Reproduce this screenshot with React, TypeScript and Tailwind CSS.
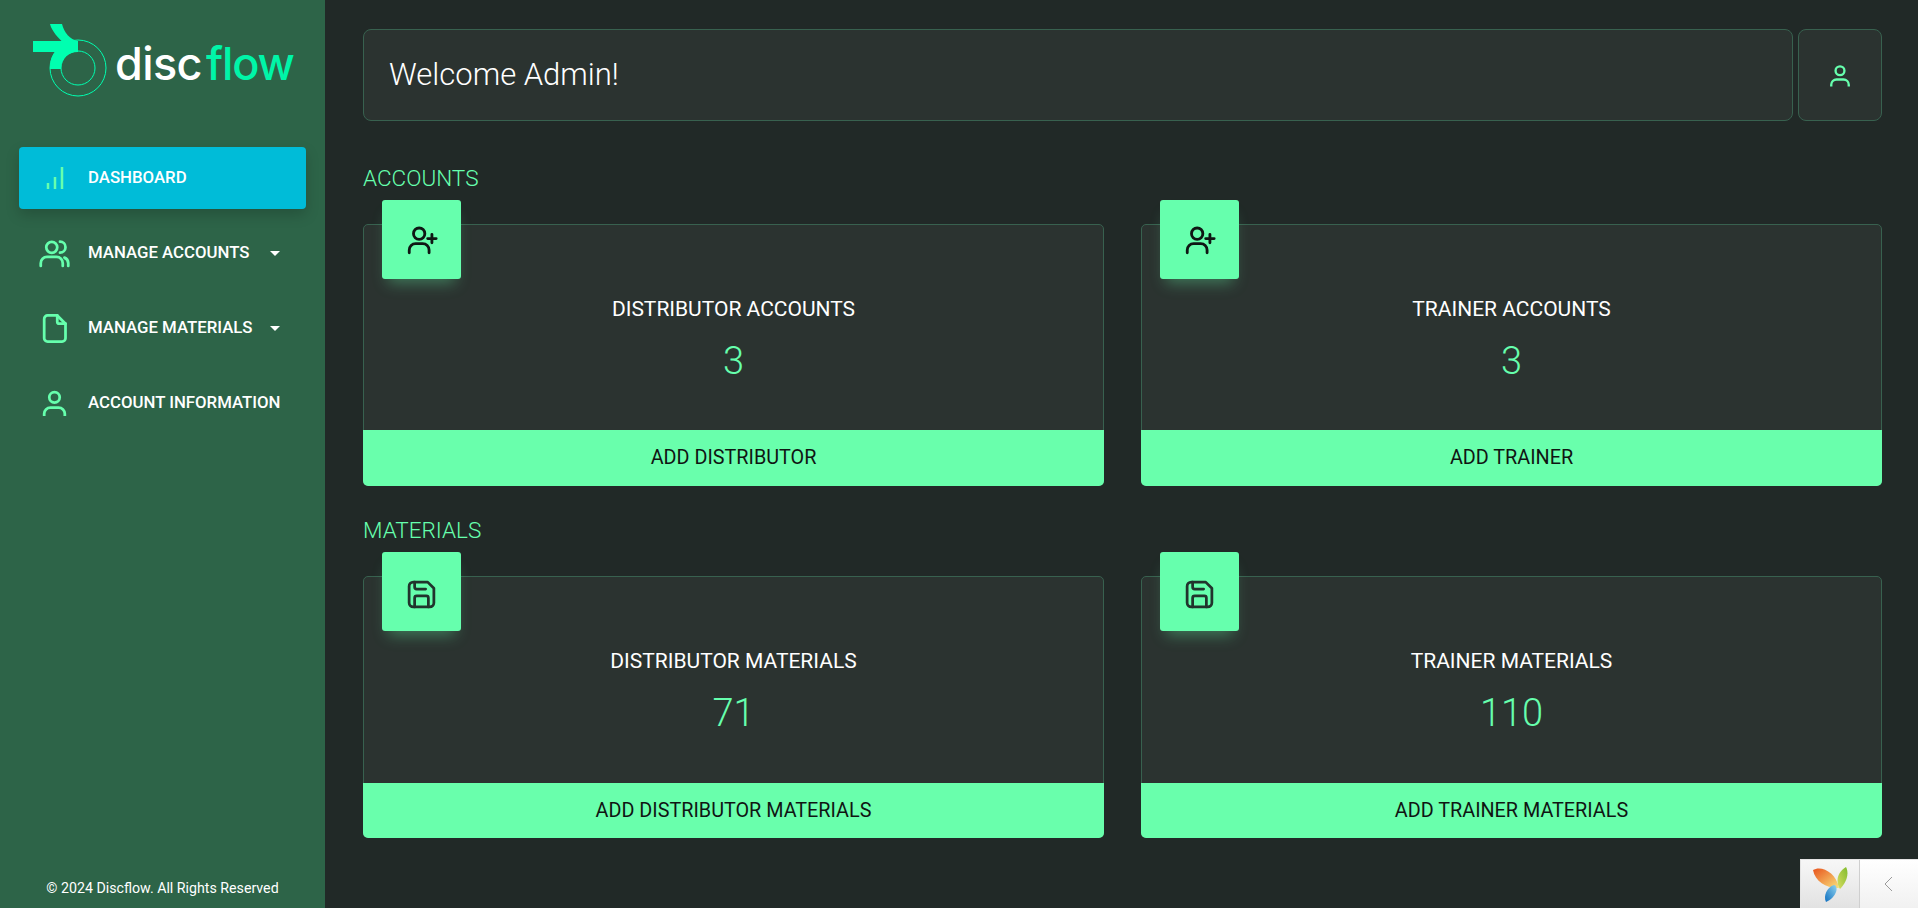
import React from "react";

const Icon = ({ size, className, children }: { size: number; className?: string; children: React.ReactNode }) => (
  <svg width={size} height={size} viewBox="0 0 24 24" fill="none" stroke="currentColor" strokeWidth={2} strokeLinecap="round" strokeLinejoin="round" className={className}>
    {children}
  </svg>
);

const UserIcon = ({ size, className }: { size: number; className?: string }) => (
  <Icon size={size} className={className}>
    <circle cx="12" cy="7.5" r="3.800" />
    <path d="M4.500 21v-1.500a4.500 4.500 0 0 1 4.500-4.500h6a4.500 4.500 0 0 1 4.500 4.500V21" strokeLinecap="butt" />
  </Icon>
);
const UsersIcon = ({ size }: { size: number }) => (
  <Icon size={size}>
    <circle cx="10" cy="7.5" r="4" />
    <path d="M2 21v-2a4.500 4.500 0 0 1 4.500-4.500h7a4.500 4.500 0 0 1 4.500 4.500v2" />
    <path d="M16 3.400a4 4 0 0 1 0 8" />
    <path d="M22 21v-2a4.500 4.500 0 0 0-2.800-4" />
  </Icon>
);
const UserPlusIcon = ({ size }: { size: number }) => (
  <Icon size={size}>
    <circle cx="10" cy="7.5" r="4" />
    <path d="M3 21v-2a4.500 4.500 0 0 1 4.500-4.500h5a4.500 4.500 0 0 1 4.500 4.500v2" />
    <path d="M19 8v6M16 11h6" />
  </Icon>
);
const FileIcon = ({ size }: { size: number }) => (
  <Icon size={size}>
    <path d="M7 2.500h7l6 6V19a2.500 2.500 0 0 1-2.500 2.500h-10.500A2.500 2.500 0 0 1 4.500 19V5A2.500 2.500 0 0 1 7 2.500z" />
    <path d="M14 2.500V7a1.500 1.500 0 0 0 1.500 1.500H20" />
  </Icon>
);
const SaveIcon = ({ size }: { size: number }) => (
  <Icon size={size}>
    <path d="M6 3h10.500L21 7.500V18a3 3 0 0 1-3 3H6a3 3 0 0 1-3-3V6a3 3 0 0 1 3-3z" />
    <path d="M7 21v-6.500a1.500 1.500 0 0 1 1.500-1.500h7a1.500 1.500 0 0 1 1.500 1.500V21" />
    <path d="M7 3v3.500A1.500 1.500 0 0 0 8.500 8H15" />
  </Icon>
);

const Logo = () => (
  <div className="flex items-center h-[120px] pl-[33px]">
    <svg width="84" height="80" viewBox="33 21 84 80" className="shrink-0 mt-[1px]" fill="none">
      <circle cx="78" cy="68" r="28" stroke="#00ffb0" strokeWidth="1" />
      <circle cx="78" cy="68" r="17" stroke="#00ffb0" strokeWidth="1" />
      <path d="M33 41h28.500C59 38 52 32 50 24h12c2 8 8 16 16 17v11c-10 0-17 7-17 17H50c0-6 1-12 5-17H33z" fill="#00ffb0" />
    </svg>
    <div className="ml-[-2px] mt-[6px] text-[45px] leading-none font-medium font-[Inter,sans-serif] tracking-[-0.6px] flex">
      <span className="text-white">disc</span>
      <span className="text-[#00f5a8] ml-[4px] tracking-[-1.100px]">flow</span>
    </div>
  </div>
);

const navItems: { label: string; icon: React.ReactNode; caret?: boolean; active?: boolean }[] = [
  { label: "DASHBOARD", active: true, icon: (
    <svg width="22" height="24" viewBox="0 0 22 24" fill="none" stroke="#66ffad" strokeWidth="2.500" className="ml-[2px]"><path d="M3 23v-6M10 23V11M17 23V1" /></svg>
  ) },
  { label: "MANAGE ACCOUNTS", caret: true, icon: <UsersIcon size={33} /> },
  { label: "MANAGE MATERIALS", caret: true, icon: <FileIcon size={33} /> },
  { label: "ACCOUNT INFORMATION", icon: <UserIcon size={33} /> },
];

const Card = ({ title, value, action, icon, iconClass, footerClass }: { title: string; value: string; action: string; icon: React.ReactNode; iconClass: string; footerClass: string }) => (
  <div className="relative h-[262px] rounded-[5px] border border-[#38614f] bg-[#2b3330] flex flex-col">
    <div className={`absolute left-[18px] top-[-25px] w-[79px] h-[79px] rounded-[3px] bg-[#66ffad] flex items-center justify-center ${iconClass} shadow-[0_10px_14px_-6px_rgba(102,255,173,0.35)]`}>
      {icon}
    </div>
    <div className="flex-1 flex flex-col items-center pt-[72px]">
      <div className="text-white text-[21px] leading-[24px] font-[Roboto,sans-serif]">{title}</div>
      <div className="mt-[17px] text-[#66ffad] text-[38px] leading-[46px] font-light font-[Roboto,sans-serif]">{value}</div>
    </div>
    <div className={`-mx-px -mb-px rounded-b-[5px] bg-[#69ffac] flex items-center justify-center text-[#101513] text-[19.800px] font-[Roboto,sans-serif] ${footerClass}`}>
      {action}
    </div>
  </div>
);

const Heading = ({ children, top }: { children: React.ReactNode; top: string }) => (
  <h3 className={`${top} mb-[32px] h-[28px] leading-[28px] text-[22.500px] font-light text-[#66ffad] font-[Roboto,sans-serif]`}>{children}</h3>
);

export default function App() {
  return (
    <div className="relative flex h-[908px] w-full overflow-hidden bg-[#212927] font-[Roboto,sans-serif]">
      <aside className="w-[325px] shrink-0 bg-[#2d6448] flex flex-col">
        <Logo />
        <nav className="mt-[27px] px-[19px] flex flex-col gap-[13px]">
          {navItems.map((n) => (
            <div key={n.label} className={`h-[62px] flex items-center rounded-[4px] ${n.active ? "bg-[#00bcd8] shadow-[0_6px_14px_rgba(0,0,0,0.18)]" : ""}`}>
              <div className="w-[69px] shrink-0 flex justify-center pl-[2px] text-[#66ffad]">{n.icon}</div>
              <span className="text-white text-[16.800px] font-medium whitespace-nowrap">{n.label}</span>
              {n.caret && <span className="ml-auto mr-[26px] w-0 h-0 border-x-[5.500px] border-x-transparent border-t-[5px] border-t-white" />}
            </div>
          ))}
        </nav>
        <div className="mt-auto pb-[9px] text-center text-white text-[14.200px]">© 2024 Discflow. All Rights Reserved</div>
      </aside>

      <main className="flex-1 pl-[38px] pr-[36px] pt-[29px]">
        <div className="flex gap-[5px] h-[92px]">
          <div className="flex-1 rounded-[8px] border border-[#38614f] bg-[#2b3330] flex items-center pl-[25px] text-white text-[31px] font-light">Welcome Admin!</div>
          <div className="w-[84px] rounded-[8px] border border-[#38614f] bg-[#2b3330] flex items-center justify-center text-[#66ffad]"><UserIcon size={28} className="mt-[2px]" /></div>
        </div>
        <Heading top="mt-[43px]">ACCOUNTS</Heading>
        <div className="grid grid-cols-2 gap-[37px]">
          <Card title="DISTRIBUTOR ACCOUNTS" value="3" action="ADD DISTRIBUTOR" footerClass="h-[56px]" iconClass="text-[#0f1714]" icon={<UserPlusIcon size={34} />} />
          <Card title="TRAINER ACCOUNTS" value="3" action="ADD TRAINER" footerClass="h-[56px]" iconClass="text-[#0f1714]" icon={<UserPlusIcon size={34} />} />
        </div>
        <Heading top="mt-[30px]">MATERIALS</Heading>
        <div className="grid grid-cols-2 gap-[37px]">
          <Card title="DISTRIBUTOR MATERIALS" value="71" action="ADD DISTRIBUTOR MATERIALS" footerClass="h-[55px]" iconClass="text-[#21342d] pt-[6px]" icon={<SaveIcon size={33} />} />
          <Card title="TRAINER MATERIALS" value="110" action="ADD TRAINER MATERIALS" footerClass="h-[55px]" iconClass="text-[#21342d] pt-[6px]" icon={<SaveIcon size={33} />} />
        </div>
      </main>

      <div className="absolute right-0 bottom-0 w-[118px] h-[49px] flex border-t border-l border-[#e4e4e4] bg-white">
        <div className="w-[59px] border-r border-[#cfcfcf] bg-gradient-to-b from-[#f7f7f7] to-[#e2e2e2] flex items-center justify-center">
          <svg width="37" height="36" viewBox="0 0 37 36">
            <defs>
              <linearGradient id="yo" x1="0" y1="0" x2="1" y2="1"><stop offset="0" stopColor="#e8531c" /><stop offset="1" stopColor="#f9e27d" /></linearGradient>
              <linearGradient id="yg" x1="1" y1="0" x2="0" y2="1"><stop offset="0" stopColor="#7fbb2c" /><stop offset="1" stopColor="#d9dd62" /></linearGradient>
              <linearGradient id="yb" x1="0" y1="1" x2="1" y2="0"><stop offset="0" stopColor="#0f6fc0" /><stop offset="1" stopColor="#8fd2ee" /></linearGradient>
            </defs>
            <path d="M1 4C9 -1 24 6 27 22C16 23 3 16 1 4z" fill="url(#yo)" />
            <path d="M34 1C38 9 33 18 28 23C24 17 24 7 34 1z" fill="url(#yg)" />
            <path d="M14 36C11 30 15 21 22 19C27 20 25 31 14 36z" fill="url(#yb)" />
          </svg>
        </div>
        <div className="flex-1 bg-gradient-to-b from-white to-[#f1f1f1] flex items-center justify-center">
          <svg width="10" height="16" viewBox="0 0 10 16" fill="none" stroke="#9a9a9a" strokeWidth="1"><path d="M8 1L1 8l7 7" /></svg>
        </div>
      </div>
    </div>
  );
}
